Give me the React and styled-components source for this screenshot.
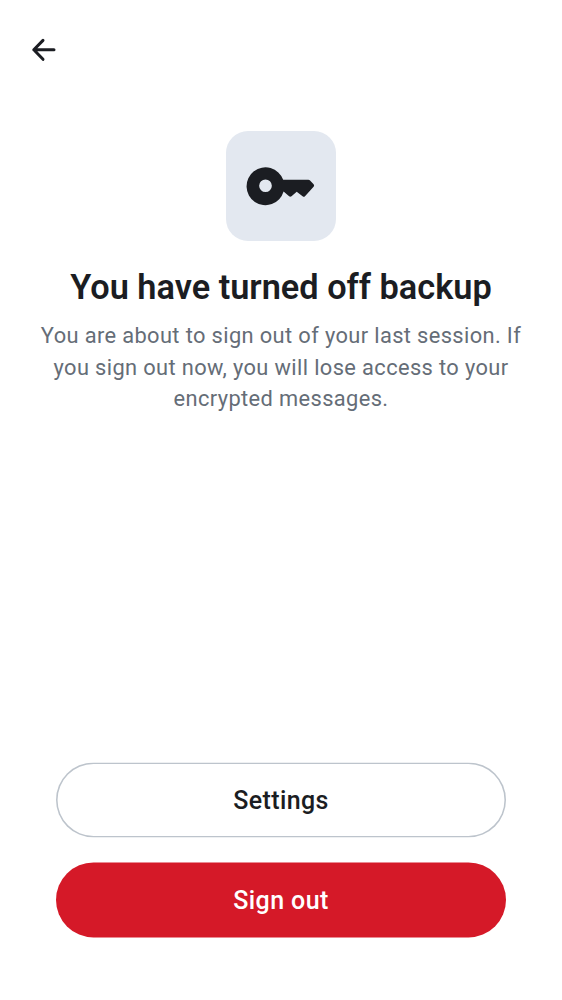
import React from 'react';
import styled, { createGlobalStyle } from 'styled-components';

const GlobalStyle = createGlobalStyle`
  * { box-sizing: border-box; }
  body { margin: 0; background: #fff; font-family: Roboto, sans-serif; }
`;

const Screen = styled.main`
  display: flex;
  flex-direction: column;
  height: 1000px;
  padding: 0 25px 63px;
  background: #fff;
  color: #1b1d22;
`;

const TopBar = styled.header`
  display: flex;
  align-items: center;
  height: 100px;
`;

const BackButton = styled.button`
  display: flex;
  padding: 0;
  border: 0;
  background: none;
  color: inherit;
`;

const Intro = styled.section`
  display: flex;
  flex-direction: column;
  align-items: center;
  padding-top: 31px;
  text-align: center;
`;

const IconTile = styled.div`
  display: flex;
  width: 110px;
  height: 110px;
  border-radius: 22px;
  background: #e3e8f0;
`;

const Title = styled.h1`
  margin: 26px 0 0;
  font-size: 34.34px;
  line-height: 40px;
  font-weight: 600;
  letter-spacing: 0;
  white-space: nowrap;
`;

const Message = styled.p`
  margin: 13px 0 0;
  font-size: 21.85px;
  line-height: 31.5px;
  letter-spacing: 0.37px;
  color: #656d77;
  white-space: nowrap;
`;

const Actions = styled.footer`
  display: flex;
  flex-direction: column;
  gap: 25px;
  margin-top: auto;
  padding: 0 31px;
  transform: translateY(0.45px);
`;

const Button = styled.button`
  height: 75px;
  padding: 1px 0 0;
  border: 0;
  border-radius: 37.5px;
  box-shadow: ${({ $primary }) => ($primary ? 'none' : 'inset 0 0 0 1.56px #bdc4cc')};
  background: ${({ $primary }) => ($primary ? '#d51928' : '#fff')};
  color: ${({ $primary }) => ($primary ? '#fff' : '#1b1d22')};
  font: 500 25px/37px Roboto, sans-serif;
  letter-spacing: 0.4px;
`;

const KeyIcon = () => (
  <svg width="110" height="110" viewBox="0 0 110 110" fill="#1b1d22">
    <path fillRule="evenodd" d="M57.2 48.7H82.4Q83.2 48.7 83.8 49.3L87.6 53.3Q88.6 54.6 87.6 55.8L79 65.2Q77.8 66.2 76.6 65.2L70.7 60.7L65.5 65.3Q64.3 66.2 63.1 65.3L57.6 60.6A18.9 18.9 0 1 1 57.2 48.7ZM39.5 48.4A6.35 6.35 0 1 0 39.5 61.1A6.35 6.35 0 1 0 39.5 48.4Z" />
  </svg>
);

export default function App() {
  return (
    <Screen>
      <GlobalStyle />
      <TopBar>
        <BackButton aria-label="Back">
          <svg width="37" height="36" viewBox="0 0 37 36" fill="none" stroke="currentColor" strokeWidth="3" strokeLinecap="round" strokeLinejoin="round">
            <path d="M29 17.8H8.8M18 8.4L8.8 17.8L18 27.3" />
          </svg>
        </BackButton>
      </TopBar>
      <Intro>
        <IconTile><KeyIcon /></IconTile>
        <Title>You have turned off backup</Title>
        <Message>
          You are about to sign out of your last session. If<br />
          you sign out now, you will lose access to your<br />
          encrypted messages.
        </Message>
      </Intro>
      <Actions>
        <Button>Settings</Button>
        <Button $primary>Sign out</Button>
      </Actions>
    </Screen>
  );
}
